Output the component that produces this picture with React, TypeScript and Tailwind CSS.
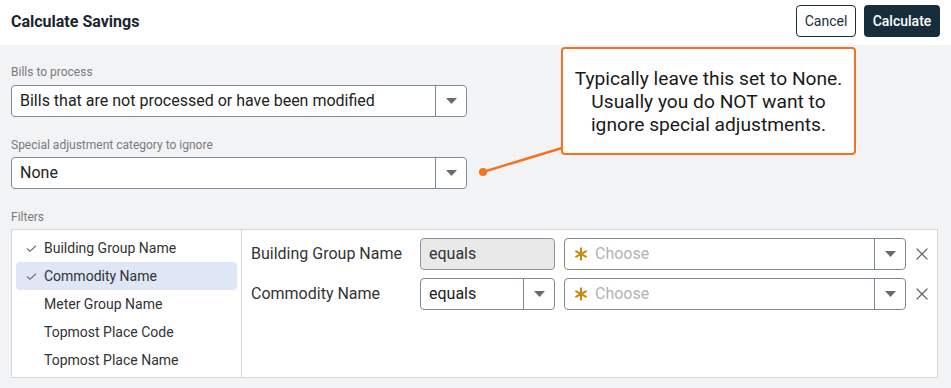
import { X } from 'lucide-react';

// small caret used inside the select boxes
const Caret = () => (
  <svg width="11" height="6" viewBox="0 0 11 6" className="block">
    <path d="M0 0 H11 L5.5 6 Z" fill="#6b6b6b" />
  </svg>
);

const Check = () => (
  <svg width="11" height="7" viewBox="0 0 11 7" className="block">
    <polyline points="1,3.5 4,6.3 10,0.7" fill="none" stroke="#777" strokeWidth="1.2" />
  </svg>
);

const Asterisk = () => (
  <svg width="14" height="14" viewBox="0 0 14 14" className="block">
    <g stroke="#c98a0b" strokeWidth="2" strokeLinecap="butt">
      <line x1="7" y1="0.5" x2="7" y2="13.5" />
      <line x1="1.4" y1="3.8" x2="12.6" y2="10.2" />
      <line x1="1.4" y1="10.2" x2="12.6" y2="3.8" />
    </g>
  </svg>
);

const Select = ({ value, className = '' }: { value: string; className?: string }) => (
  <div className={`flex h-8 bg-white border border-[#7d8a95] rounded ${className}`}>
    <div className="flex-1 flex items-center pl-2 text-base text-[#222] truncate">{value}</div>
    <div className="w-[31px] border-l border-[#7d8a95] flex items-center justify-center">
      <Caret />
    </div>
  </div>
);

const ChooseSelect = () => (
  <div className="flex h-8 w-[342px] bg-white border border-[#7d8a95] rounded">
    <div className="flex-1 flex items-center pl-[9px] gap-[7px] text-base text-[#b3b3b3]">
      <Asterisk /> Choose
    </div>
    <div className="w-[31px] border-l border-[#7d8a95] flex items-center justify-center">
      <Caret />
    </div>
  </div>
);

const filterFields = [
  { name: 'Building Group Name', checked: true },
  { name: 'Commodity Name', checked: true, active: true },
  { name: 'Meter Group Name' },
  { name: 'Topmost Place Code' },
  { name: 'Topmost Place Name' },
];

export default function App() {
  return (
    <div className="w-[951px] h-[388px] bg-[#f2f3f5] relative overflow-hidden" style={{ fontFamily: 'Roboto, "Liberation Sans", sans-serif' }}>
      {/* HEADER */}
      <div className="h-[45px] bg-white flex items-center justify-between pl-[11px] pr-[11px]">
        <h1 className="text-base font-bold text-[#1a2530] -mt-[2px]">Calculate Savings</h1>
        <div className="flex gap-2 -mt-[3px]">
          <button className="h-8 w-[60px] border border-[#1b2e3b] rounded-[4px] bg-white text-[14px] text-[#1b2e3b]">Cancel</button>
          <button className="h-8 w-[76px] rounded-[4px] bg-[#182d3b] text-[14px] font-medium text-white">Calculate</button>
        </div>
      </div>

      {/* BODY */}
      <div className="pl-[11px] pt-[19px]">
        <div className="text-xs leading-4 text-[#7a7a7a] mb-[5px]">Bills to process</div>
        <Select value="Bills that are not processed or have been modified" className="w-[456px]" />

        <div className="text-xs leading-4 text-[#7a7a7a] mt-5 mb-1">Special adjustment category to ignore</div>
        <Select value="None" className="w-[456px]" />

        <div className="text-xs leading-4 text-[#7a7a7a] mt-5 mb-1">Filters</div>
        <div className="w-[927px] h-[149px] bg-white border border-[#d6d6d6] flex">
          <div className="w-[230px] border-r border-[#d6d6d6] pt-1 px-1">
            {filterFields.map((f) => (
              <div
                key={f.name}
                className={`h-7 flex items-center rounded text-[14px] text-[#333] ${f.active ? 'bg-[#dfe6f5]' : ''}`}
              >
                <span className="w-[28px] flex justify-center pl-[2px]">{f.checked && <Check />}</span>
                {f.name}
              </div>
            ))}
          </div>
          <div className="flex-1 pl-[9px] pt-2 flex flex-col gap-2">
            <div className="flex items-center">
              <div className="w-[169px] text-base text-[#333]">Building Group Name</div>
              <div className="w-[135px] h-8 bg-[#e9e9e9] border border-[#8a959f] rounded flex items-center pl-2 text-base text-[#333]">equals</div>
              <div className="ml-[9px]"><ChooseSelect /></div>
              <X className="ml-[6px] w-5 h-5 text-[#666]" strokeWidth={1.5} />
            </div>
            <div className="flex items-center">
              <div className="w-[169px] text-base text-[#333]">Commodity Name</div>
              <Select value="equals" className="w-[135px]" />
              <div className="ml-[9px]"><ChooseSelect /></div>
              <X className="ml-[6px] w-5 h-5 text-[#666]" strokeWidth={1.5} />
            </div>
          </div>
        </div>
      </div>

      {/* CALLOUT */}
      <svg className="absolute left-0 top-0 pointer-events-none" width="951" height="388">
        <line x1="483" y1="172" x2="562" y2="148" stroke="#f47321" strokeWidth="2.5" />
        <circle cx="483" cy="172" r="4" fill="#f47321" />
      </svg>
      <div className="absolute left-[561px] top-[47px] w-[295px] h-[108px] bg-white border-2 border-[#f47321] rounded-[4px] flex items-center justify-center text-center text-[19.2px] leading-[23px] text-[#1a1a1a]">
        <p>
          Typically leave this set to None.<br />
          Usually you do NOT want to<br />
          ignore special adjustments.
        </p>
      </div>
    </div>
  );
}
